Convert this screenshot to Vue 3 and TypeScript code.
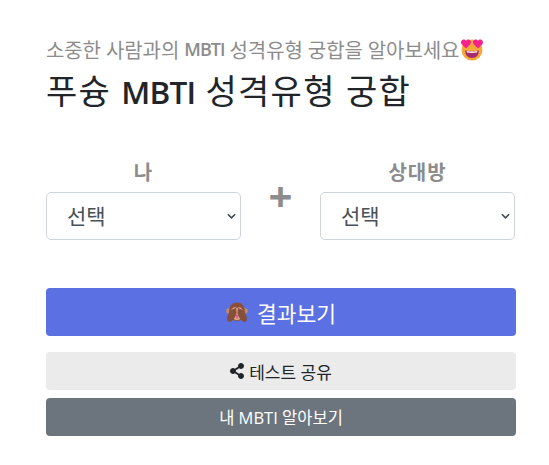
<template>
  <div class="page">
    <p class="lead">소중한 사람과의 <b>MBTI</b> 성격유형 궁합을 알아보세요<svg class="emoji" viewBox="0 0 24 24" width="24" height="24">
        <circle cx="12" cy="13" r="10.5" fill="#f4a93a" />
        <path d="M5 13.5 Q12 15 19 13.5 Q18.5 21 12 21 Q5.5 21 5 13.5Z" fill="#a52a6b" />
        <path d="M6.5 14 Q12 15 17.5 14 L17 15.6 Q12 16.4 7 15.6Z" fill="#fff" />
        <path d="M6 11.5 L1.6 7.2 C0.2 5.2 1.6 2.6 3.8 2.6 C4.9 2.6 5.6 3.2 6 4 C6.4 3.2 7.2 2.6 8.4 2.6 C10.6 2.6 11.8 5.2 10.4 7.2Z" fill="#f5218c" />
        <path d="M18 11.5 L13.6 7.2 C12.2 5.2 13.4 2.6 15.6 2.6 C16.8 2.6 17.6 3.2 18 4 C18.4 3.2 19.1 2.6 20.2 2.6 C22.4 2.6 23.8 5.2 22.4 7.2Z" fill="#f5218c" />
      </svg></p>
    <h1 class="title">푸슝 <b>MBTI</b> 성격유형 궁합</h1>

    <div class="pickers">
      <div class="picker">
        <label>나</label>
        <select v-model="me">
          <option value="">선택</option>
          <option v-for="t in types" :key="t" :value="t">{{ t }}</option>
        </select>
      </div>
      <div class="plus">+</div>
      <div class="picker">
        <label>상대방</label>
        <select v-model="other">
          <option value="">선택</option>
          <option v-for="t in types" :key="t" :value="t">{{ t }}</option>
        </select>
      </div>
    </div>

    <button class="btn primary" type="button">
      <svg class="monkey" viewBox="0 0 24 24" width="22" height="22">
        <circle cx="3.2" cy="11" r="3" fill="#c08a68" />
        <circle cx="20.8" cy="11" r="3" fill="#c08a68" />
        <path d="M12 1.5 C6 1.5 3.5 6 3.5 11 C3.5 17 7 22 12 22 C17 22 20.5 17 20.5 11 C20.5 6 18 1.5 12 1.5Z" fill="#8c4f38" />
        <path d="M5.5 12 C5.5 7.5 9 6 12 7.5 C15 6 18.5 7.5 18.5 12 C18.5 17 16 21 12 21 C8 21 5.5 17 5.5 12Z" fill="#d9a484" />
        <path d="M10 15 L12 20 L14 15Z" fill="#e0558a" />
        <path d="M1.5 21.5 C0.5 17 3 12 6 9.5 L11 7.5 L11.5 13 C10.5 17 8 21 5 22.5 C3.5 23 2 22.5 1.5 21.5Z" fill="#85503a" />
        <path d="M22.5 21.5 C23.5 17 21 12 18 9.5 L13 7.5 L12.5 13 C13.5 17 16 21 19 22.5 C20.5 23 22 22.5 22.5 21.5Z" fill="#85503a" />
      </svg>
      결과보기
    </button>
    <button class="btn share" type="button">
      <svg viewBox="0 0 448 512" width="14" height="16">
        <path fill="#212529" d="M352 320c-22.6 0-43.4 7.8-59.8 20.9l-102.5-64.1a96.6 96.6 0 0 0 0-41.7l102.5-64.1C308.6 184.2 329.4 192 352 192c53 0 96-43 96-96S405 0 352 0s-96 43-96 96c0 7.2.8 14.1 2.3 20.8l-102.5 64.1C139.4 167.8 118.6 160 96 160c-53 0-96 43-96 96s43 96 96 96c22.6 0 43.4-7.8 59.8-20.9l102.5 64.1A96.3 96.3 0 0 0 256 416c0 53 43 96 96 96s96-43 96-96-43-96-96-96z" />
      </svg>
      테스트 공유
    </button>
    <button class="btn grey" type="button">내 MBTI 알아보기</button>
  </div>
</template>

<script setup lang="ts">
import { ref } from 'vue';

const types = ['ISTJ', 'ISFJ', 'INFJ', 'INTJ', 'ISTP', 'ISFP', 'INFP', 'INTP', 'ESTP', 'ESFP', 'ENFP', 'ENTP', 'ESTJ', 'ESFJ', 'ENFJ', 'ENTJ'];

const me = ref('');
const other = ref('');
</script>

<style>
html,
body {
  background: #fff;
}
</style>

<style scoped>
.page {
  box-sizing: border-box;
  width: 549px;
  height: 465px;
  padding: 35px 33px 0 46px;
  overflow: hidden;
  font-family: 'Open Sans', 'Noto Sans CJK KR', sans-serif;
  color: #212529;
}

.lead {
  display: flex;
  align-items: center;
  margin: 0;
  height: 28px;
  font-size: 20px;
  letter-spacing: -0.1px;
  color: #8c8c8c;
  white-space: pre-wrap;
}

.lead b {
  font-size: 18px;
  font-weight: 600;
  letter-spacing: -1px;
}

.emoji {
  margin-left: 1px;
}

.title {
  margin: 4px 0 0;
  font-size: 34px;
  line-height: 48px;
  font-weight: 400;
  letter-spacing: 1.3px;
  color: #212529;
  white-space: pre-wrap;
}

.title b {
  font-size: 31.5px;
  font-weight: 600;
  letter-spacing: -0.8px;
}

.pickers {
  display: flex;
  align-items: flex-start;
  margin-top: 32px;
}

.picker {
  display: flex;
  flex-direction: column;
  width: 195px;
}

.picker label {
  height: 44px;
  padding-top: 12px;
  box-sizing: border-box;
  line-height: 26px;
  text-align: center;
  font-size: 20px;
  letter-spacing: 1px;
  font-weight: 700;
  color: #8c8c8c;
}

.picker select {
  box-sizing: border-box;
  width: 195px;
  height: 48px;
  padding: 0 0 0 20px;
  appearance: none;
  border: 1px solid #ced4da;
  border-radius: 5px;
  font-family: inherit;
  font-size: 21px;
  color: #495057;
  background: #fff url("data:image/svg+xml,%3Csvg xmlns='http://www.w3.org/2000/svg' viewBox='0 0 10 6'%3E%3Cpath d='M1 1l4 4 4-4' fill='none' stroke='%23444b55' stroke-width='1.8'/%3E%3C/svg%3E") no-repeat right 4px center / 9px 6px;
}

.plus {
  width: 79px;
  margin-top: 23px;
  text-align: center;
  font-size: 42px;
  line-height: 50px;
  font-weight: 700;
  color: #8c8c8c;
}

.btn {
  display: flex;
  align-items: center;
  justify-content: center;
  width: 470px;
  padding: 0;
  border: none;
  border-radius: 4px;
  font-family: inherit;
}

.primary {
  gap: 9px;
  height: 48px;
  margin-top: 48px;
  font-size: 21.5px;
  color: #fff;
  background: #5b70e2;
}

.share {
  gap: 5px;
  height: 38px;
  margin-top: 16px;
  font-size: 17px;
  color: #212529;
  background: #ebebeb;
}

.grey {
  height: 38px;
  margin-top: 8px;
  font-size: 16.5px;
  color: #fff;
  background: #6c757d;
}
</style>
